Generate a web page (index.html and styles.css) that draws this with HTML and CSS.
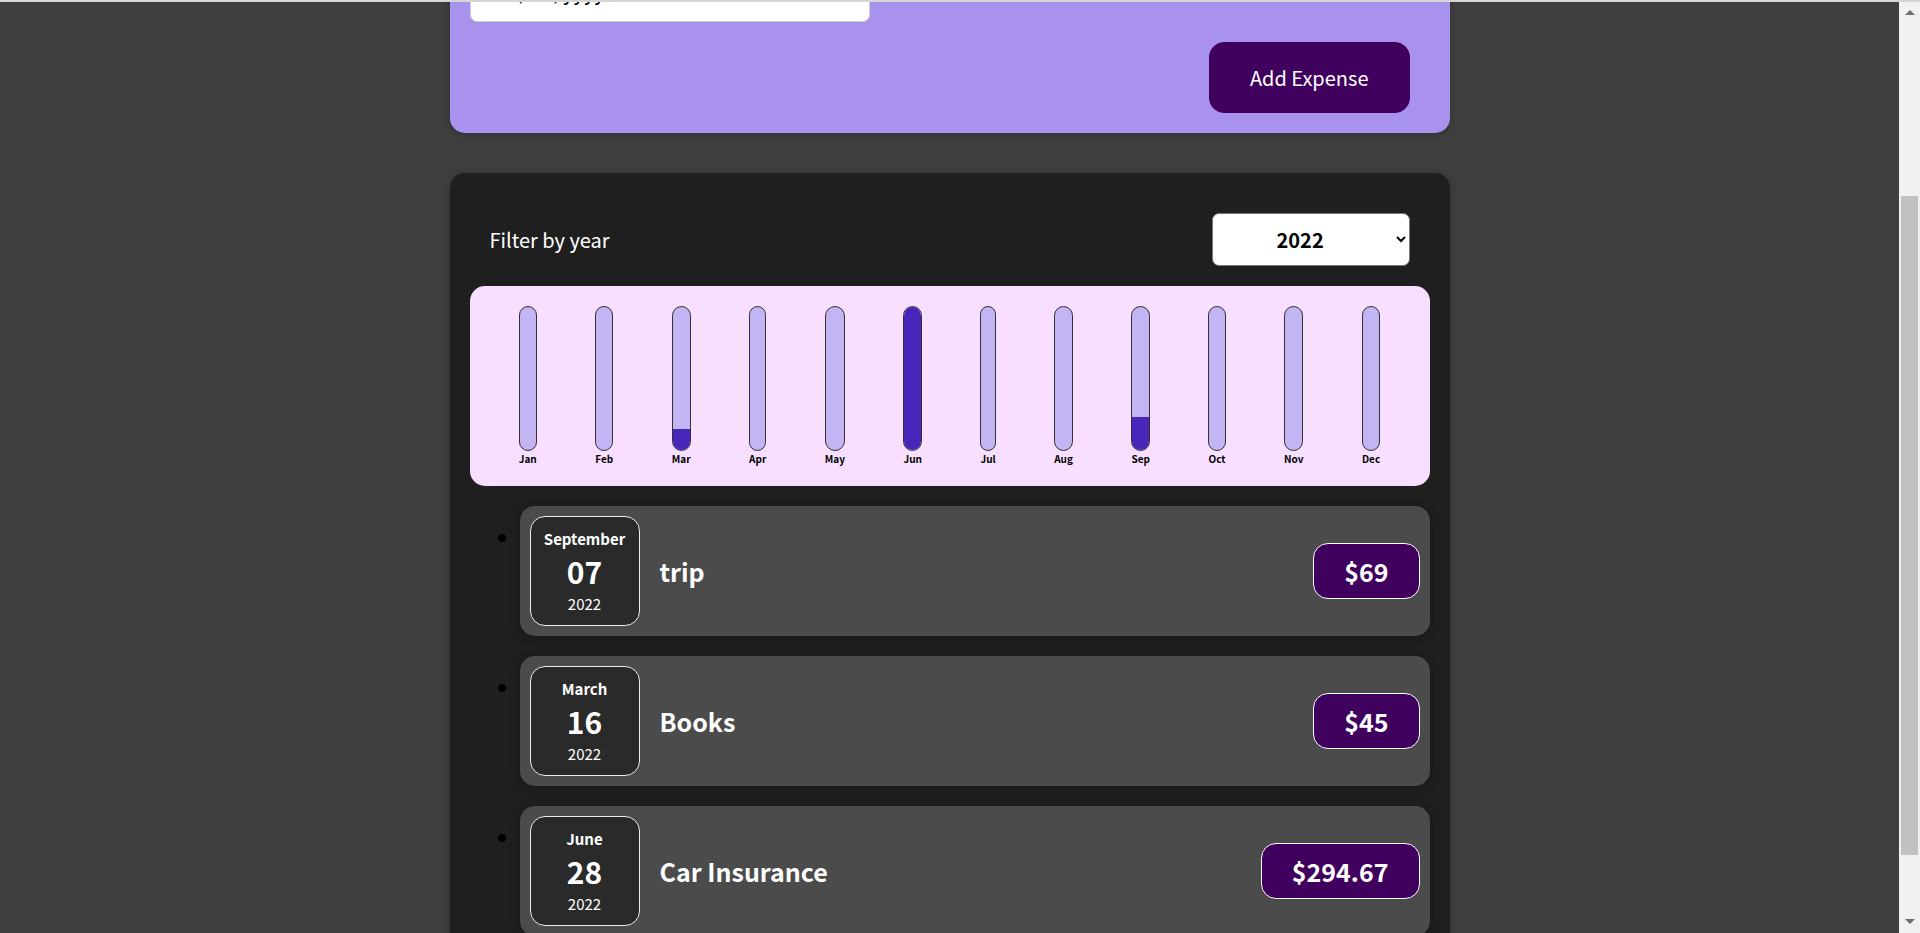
FILE: index.html
```html
<!DOCTYPE html>
<html lang="en">
<head>
<meta charset="utf-8">
<title>Expense Tracker</title>
<link rel="stylesheet" href="styles.css">
</head>
<body>
<div class="top-line"></div>
<div class="scrollbar" aria-hidden="true">
  <div class="sb-btn"><span class="sb-arrow sb-arrow--up"></span></div>
  <div class="sb-track">
    <div class="sb-thumb"></div>
  </div>
  <div class="sb-btn"><span class="sb-arrow sb-arrow--down"></span></div>
</div>
<div id="root">
  <div class="new-expense card">
    <form>
      <div class="new-expense__controls">
        <div class="new-expense__control">
          <label>Title</label>
          <input type="text">
        </div>
        <div class="new-expense__control">
          <label>Amount</label>
          <input type="number" min="0.01" step="0.01">
        </div>
        <div class="new-expense__control">
          <label>Date</label>
          <input type="date" min="2019-01-01" max="2022-12-31">
        </div>
      </div>
      <div class="new-expense__actions">
        <button type="submit">Add Expense</button>
      </div>
    </form>
  </div>

  <div class="expenses card">
    <div class="expenses-filter">
      <div class="expenses-filter__control">
        <label>Filter by year</label>
        <select>
          <option>2022</option>
          <option>2021</option>
          <option>2020</option>
          <option>2019</option>
        </select>
      </div>
    </div>

    <div class="chart">
      <div class="chart-bar"><div class="chart-bar__inner"><div class="chart-bar__fill" style="height:0%"></div></div><div class="chart-bar__label">Jan</div></div>
      <div class="chart-bar"><div class="chart-bar__inner"><div class="chart-bar__fill" style="height:0%"></div></div><div class="chart-bar__label">Feb</div></div>
      <div class="chart-bar"><div class="chart-bar__inner"><div class="chart-bar__fill" style="height:15%"></div></div><div class="chart-bar__label">Mar</div></div>
      <div class="chart-bar"><div class="chart-bar__inner"><div class="chart-bar__fill" style="height:0%"></div></div><div class="chart-bar__label">Apr</div></div>
      <div class="chart-bar"><div class="chart-bar__inner"><div class="chart-bar__fill" style="height:0%"></div></div><div class="chart-bar__label">May</div></div>
      <div class="chart-bar"><div class="chart-bar__inner"><div class="chart-bar__fill" style="height:100%"></div></div><div class="chart-bar__label">Jun</div></div>
      <div class="chart-bar"><div class="chart-bar__inner"><div class="chart-bar__fill" style="height:0%"></div></div><div class="chart-bar__label">Jul</div></div>
      <div class="chart-bar"><div class="chart-bar__inner"><div class="chart-bar__fill" style="height:0%"></div></div><div class="chart-bar__label">Aug</div></div>
      <div class="chart-bar"><div class="chart-bar__inner"><div class="chart-bar__fill" style="height:23%"></div></div><div class="chart-bar__label">Sep</div></div>
      <div class="chart-bar"><div class="chart-bar__inner"><div class="chart-bar__fill" style="height:0%"></div></div><div class="chart-bar__label">Oct</div></div>
      <div class="chart-bar"><div class="chart-bar__inner"><div class="chart-bar__fill" style="height:0%"></div></div><div class="chart-bar__label">Nov</div></div>
      <div class="chart-bar"><div class="chart-bar__inner"><div class="chart-bar__fill" style="height:0%"></div></div><div class="chart-bar__label">Dec</div></div>
    </div>

    <ul class="expenses-list">
      <li>
        <div class="expense-item card">
          <div class="expense-date">
            <div class="expense-date__month">September</div>
            <div class="expense-date__day">07</div>
            <div class="expense-date__year">2022</div>
          </div>
          <div class="expense-item__description">
            <h2>trip</h2>
            <div class="expense-item__price">$69</div>
          </div>
        </div>
      </li>
      <li>
        <div class="expense-item card">
          <div class="expense-date">
            <div class="expense-date__month">March</div>
            <div class="expense-date__day">16</div>
            <div class="expense-date__year">2022</div>
          </div>
          <div class="expense-item__description">
            <h2>Books</h2>
            <div class="expense-item__price">$45</div>
          </div>
        </div>
      </li>
      <li>
        <div class="expense-item card">
          <div class="expense-date">
            <div class="expense-date__month">June</div>
            <div class="expense-date__day">28</div>
            <div class="expense-date__year">2022</div>
          </div>
          <div class="expense-item__description">
            <h2>Car Insurance</h2>
            <div class="expense-item__price">$294.67</div>
          </div>
        </div>
      </li>
    </ul>
  </div>
</div>
<script src="script.js"></script>
</body>
</html>
```

FILE: styles.css
```css
* {
  box-sizing: border-box;
}

html {
  font-family: "Noto Sans CJK JP", "Noto Sans", sans-serif;
  font-size: 20px;
  overflow: hidden;
  scrollbar-width: none;
}

body {
  margin: 0;
  padding-right: 21px;
  background-color: #3f3f3f;
}

/* window edge + emulated scrollbar (overlays) */
.top-line {
  position: fixed;
  top: 0;
  left: 0;
  right: 0;
  height: 2px;
  background: #d6d6d6;
  z-index: 20;
}

.scrollbar {
  position: fixed;
  top: 0;
  right: 0;
  bottom: 0;
  width: 21px;
  background: #f1f1f1;
  display: flex;
  flex-direction: column;
  z-index: 10;
}

.sb-btn {
  height: 21px;
  flex: 0 0 21px;
  display: flex;
  align-items: center;
  justify-content: center;
}

.sb-arrow {
  width: 0;
  height: 0;
  border-left: 5px solid transparent;
  border-right: 5px solid transparent;
}

.sb-arrow--up {
  border-bottom: 5px solid #6e6e6e;
  margin-top: 3px;
}

.sb-arrow--down {
  border-top: 5px solid #6e6e6e;
  margin-bottom: 3px;
}

.sb-track {
  flex: 1;
  padding: 175px 2px 0;
}

.sb-thumb {
  height: 659px;
  background: #c1c1c1;
}

.card {
  border-radius: 15px;
  box-shadow: 0 1px 10px rgba(0, 0, 0, 0.25);
}

/* New expense form */
.new-expense {
  background-color: #a892ee;
  padding: 20px;
  margin: 40px auto;
  width: 1000px;
  max-width: 95%;
  text-align: center;
}

.new-expense__controls {
  display: flex;
  flex-wrap: wrap;
  gap: 20px;
  margin-bottom: 20px;
  text-align: left;
  padding-top: 10px;
}

.new-expense__control label {
  font-weight: bold;
  margin-bottom: 10px;
  display: block;
}

.new-expense__control input {
  font: inherit;
  padding: 10px;
  border-radius: 7px;
  border: 1px solid #ccc;
  width: 400px;
  max-width: 100%;
  background: #fff;
}

.new-expense__control input[type="date"] {
  padding: 6px 10px 14px;
}

.new-expense__actions {
  text-align: right;
}

.new-expense button {
  font: inherit;
  cursor: pointer;
  padding: 20px 40px;
  border: 1px solid #40005d;
  background-color: #40005d;
  color: white;
  border-radius: 15px;
  margin-right: 20px;
}

/* Expenses */
.expenses {
  padding: 20px;
  background-color: rgb(31, 31, 31);
  margin: 40px auto;
  width: 1000px;
  max-width: 95%;
}

.expenses-filter {
  color: white;
  padding: 0 20px;
}

.expenses-filter__control {
  display: flex;
  width: 100%;
  align-items: center;
  justify-content: space-between;
  margin: 20px 0;
}

.expenses-filter label {
  font-weight: normal;
}

.expenses-filter select {
  font: inherit;
  font-weight: bold;
  padding: 10px 68px 10px 60px;
  border-radius: 7px;
  border: 1px solid #767676;
  background-color: #fff;
  color: #000;
}

/* Chart */
.chart {
  padding: 20px;
  border-radius: 15px;
  background-color: #f8dfff;
  text-align: center;
  display: flex;
  justify-content: space-around;
  height: 200px;
}

.chart-bar {
  height: 100%;
  display: flex;
  flex-direction: column;
  align-items: center;
}

.chart-bar__inner {
  height: 100%;
  width: 100%;
  border: 1px solid #313131;
  border-radius: 15px;
  background-color: #c3b4f3;
  overflow: hidden;
  display: flex;
  flex-direction: column;
  justify-content: flex-end;
}

.chart-bar__fill {
  background-color: #4826b9;
  width: 100%;
}

.chart-bar__label {
  font-weight: bold;
  font-size: 10px;
  text-align: center;
  color: #000;
}

/* List */
.expenses-list {
  margin: 20px 0;
  padding-left: 50px;
}

.expense-item {
  display: flex;
  justify-content: space-between;
  align-items: center;
  box-shadow: 0 2px 10px rgba(0, 0, 0, 0.25);
  padding: 10px;
  margin: 20px 0;
  border-radius: 15px;
  background-color: #4b4b4b;
}

.expense-item__description {
  display: flex;
  flex-direction: row;
  align-items: center;
  justify-content: flex-start;
  flex: 1;
}

.expense-item h2 {
  font-size: 25px;
  flex: 1;
  margin: 0 20px;
  color: white;
}

.expense-item__price {
  font-size: 25px;
  font-weight: bold;
  color: white;
  background-color: #40005d;
  border: 1px solid white;
  padding: 9px 30px;
  border-radius: 15px;
}

.expense-date {
  display: flex;
  flex-direction: column;
  width: 110px;
  height: 110px;
  border: 1px solid #ececec;
  background-color: #2a2a2a;
  color: white;
  border-radius: 15px;
  align-items: center;
  justify-content: center;
}

.expense-date__month {
  font-size: 15px;
  font-weight: bold;
}

.expense-date__year {
  font-size: 15px;
}

.expense-date__day {
  font-size: 30px;
  font-weight: bold;
}
```

FILE: script.js
```js
(function () {
  function align() {
    var el = document.querySelector('.expenses');
    var top = el.getBoundingClientRect().top + window.scrollY;
    window.scrollTo(0, top - 173);
  }
  align();
  window.addEventListener('load', align);
})();
```
